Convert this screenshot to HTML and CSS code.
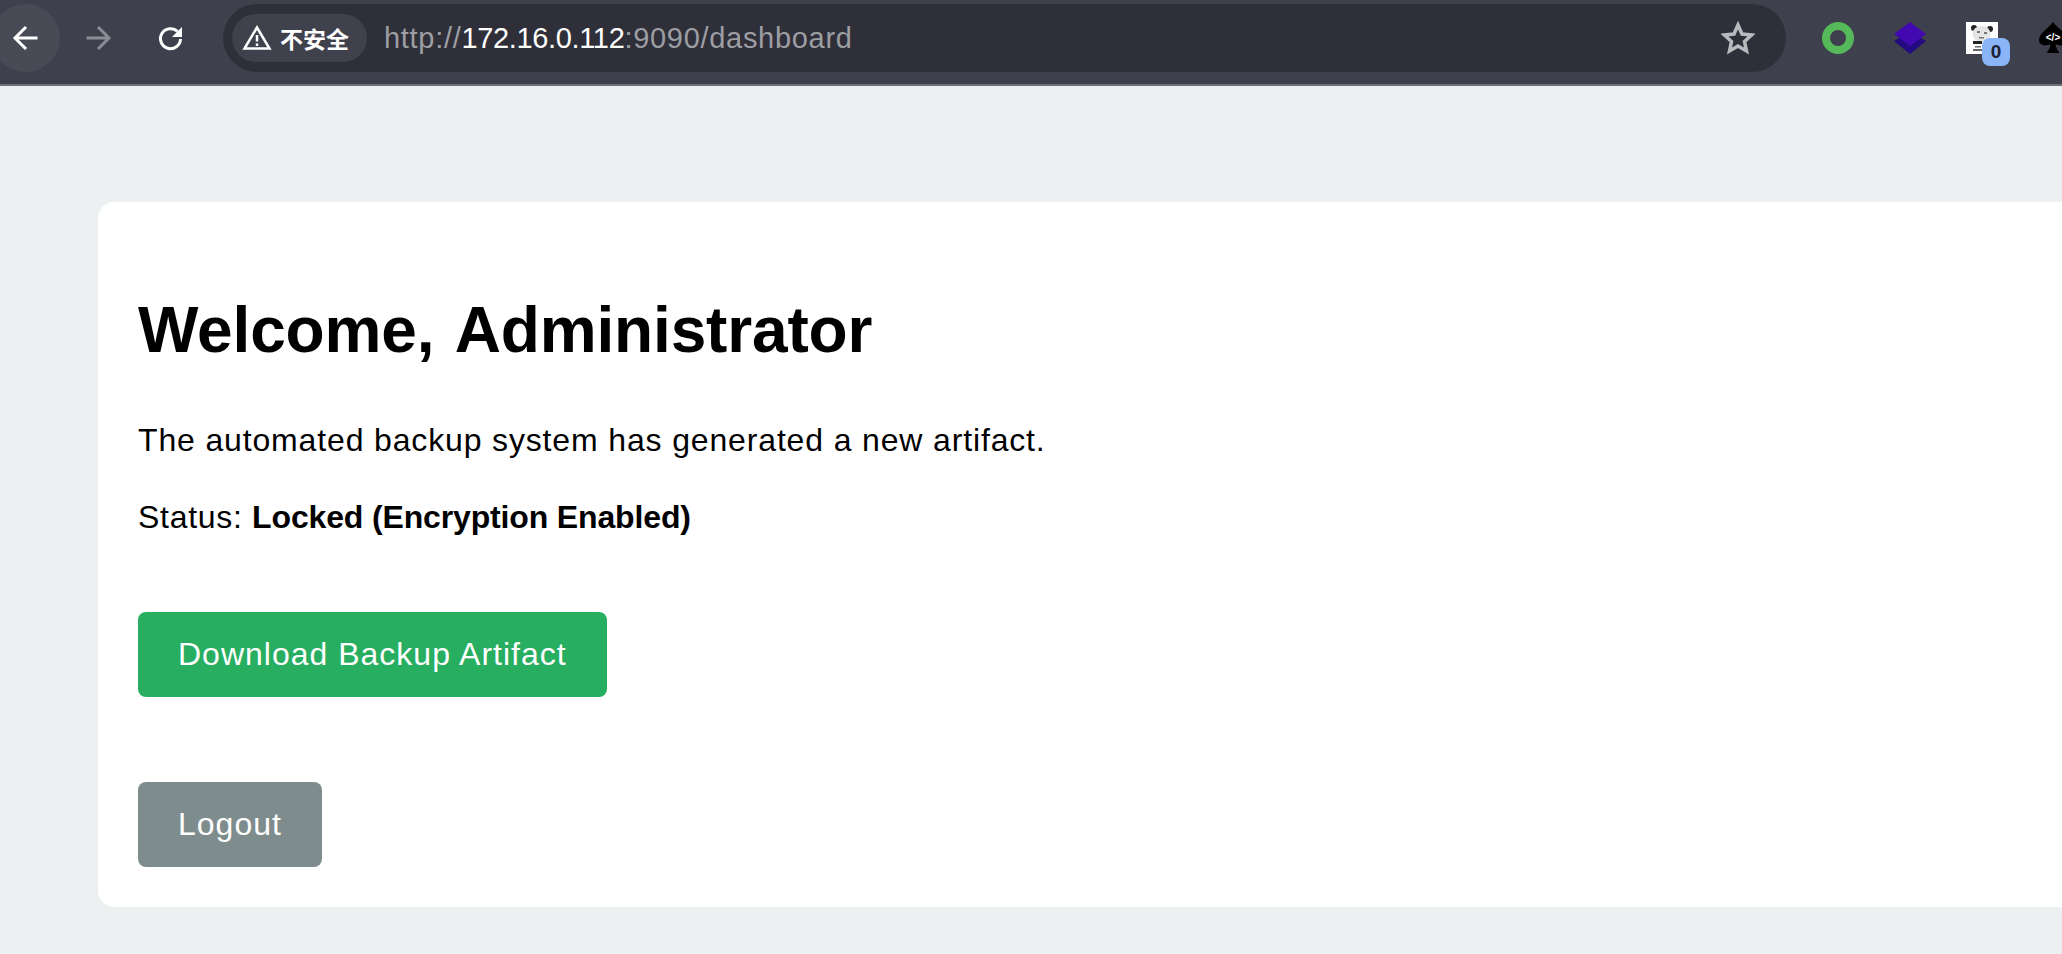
FILE: index.html
```html
<!DOCTYPE html>
<html lang="en">
<head>
  <meta charset="UTF-8"/>
  <title>Dashboard</title>
  <link rel="stylesheet" href="styles.css">
</head>
<body>

  <header class="toolbar">
    <div class="nav-btn nav-back">
      <svg width="30" height="30" viewBox="0 0 30 30"><path d="M26.500 15H4M15 4 4 15l11 11" /></svg>
    </div>
    <div class="nav-btn nav-forward">
      <svg width="30" height="30" viewBox="0 0 30 30"><path d="M3.500 15H26M15 4l11 11-11 11" /></svg>
    </div>
    <div class="nav-btn nav-reload">
      <svg width="30" height="30" viewBox="0 0 30 30"><path d="M22.500 8.500a10 10 0 1 0 3 7.500" /><path class="solid" d="M27 4v10H17z" /></svg>
    </div>

    <div class="omnibox">
      <div class="chip">
        <svg width="30" height="28" viewBox="0 0 30 28"><path d="M15 3.500 2.500 24.500h25zM15 11v6.500M15 19.500v2.500" /></svg>
        <span>不安全</span>
      </div>
      <div class="url">http://<b>172.16.0.112</b>:9090/dashboard</div>
      <svg class="star" width="34" height="34" viewBox="0 0 34 34"><path d="M17 4l4 9 9.500 1-7 6.500 2 9.500-8.500-5-8.500 5 2-9.500-7-6.500 9.500-1z" /></svg>
    </div>

    <div class="extensions">
      <svg width="32" height="32" viewBox="0 0 32 32"><circle cx="16" cy="16" r="12" fill="none" stroke="#55b95a" stroke-width="8"/></svg>
      <svg width="32" height="32" viewBox="0 0 32 32"><path fill="#230a80" d="M16 10l16 9-16 13L0 19z"/><path fill="#4209b0" d="M16 0l16 12-16 12L0 12z"/></svg>
      <div class="ext-panda">
        <svg width="32" height="32" viewBox="0 0 32 32">
          <rect width="32" height="32" fill="#fff"/>
          <ellipse cx="8" cy="6" rx="3" ry="3" fill="#222"/><ellipse cx="24" cy="7" rx="3" ry="3" fill="#222"/>
          <ellipse cx="15.500" cy="12" rx="9" ry="8" fill="#e4e4e4"/>
          <path d="M11 9h3v2h-3zM18 10h3v2h-3zM13 15h5v1.500h-5z" fill="#777"/>
          <path d="M7 19h9v3H7z" fill="#222"/>
          <path d="M9 24h6v1.500H9zM7 27h10v2H7z" fill="#666"/>
        </svg>
        <span class="badge">0</span>
      </div>
      <div class="ext-spade">
        <svg width="32" height="32" viewBox="0 0 32 32"><path fill="#000" d="M16 0C20 6 30 11 30 18c0 5-6 7-11.500 4 .5 3 2 7 4 9H9.500c2-2 3.500-6 4-9C8 25 2 23 2 18 2 11 12 6 16 0z"/></svg>
        <span>&lt;/&gt;</span>
      </div>
    </div>
  </header>

  <main class="page">
    <div class="card">
      <h1>Welcome, Administrator</h1>
      <p>The automated backup system has generated a new artifact.</p>
      <p class="status">Status: <strong>Locked (Encryption Enabled)</strong></p>
      <a class="btn btn-download" href="#">Download Backup Artifact</a>
      <a class="btn btn-logout" href="#">Logout</a>
    </div>
  </main>

</body>
</html>
```

FILE: styles.css
```css
* { box-sizing: border-box; margin: 0; padding: 0; }

html, body {
  height: 100%;
  overflow: hidden;
}

body {
  background: #ecf0f1;
  color: #000;
  font-family: "Liberation Sans", Arial, sans-serif;
}

/* browser chrome */
.toolbar {
  display: flex;
  align-items: center;
  height: 86px;
  padding-bottom: 8px;
  background: #3e404d;
  border-bottom: 2px solid #6d7078;
}

.nav-btn {
  flex: none;
  width: 72px;
  height: 68px;
  display: flex;
  align-items: center;
  justify-content: center;
}

.nav-btn svg path {
  fill: none;
  stroke: #fff;
  stroke-width: 3;
}

.nav-btn svg path.solid {
  fill: #fff;
  stroke: none;
}

.nav-back {
  width: 68px;
  margin-left: -8px;
  margin-right: 2px;
  background: #484a56;
  border-radius: 34px;
}

.nav-forward svg path { stroke: #8b8d96; }

.omnibox {
  flex: none;
  width: 1563px;
  height: 68px;
  margin-left: 17px;
  padding: 0 31px 0 9px;
  display: flex;
  align-items: center;
  background: #2e2f38;
  border-radius: 34px;
}

.chip {
  flex: none;
  width: 135px;
  height: 48px;
  padding-left: 10px;
  display: flex;
  align-items: center;
  gap: 8px;
  color: #fff;
  font: 700 23px "Noto Sans CJK SC", sans-serif;
  background: #3f414d;
  border-radius: 24px;
}

.chip svg path {
  fill: none;
  stroke: #fff;
  stroke-width: 2.500;
}

.url {
  flex: 1;
  margin-left: 17px;
  color: #9d9ea3;
  font-size: 29px;
  letter-spacing: 0.7px;
}

.url b {
  color: #fff;
  font-weight: 400;
  letter-spacing: -0.35px;
}

.star path {
  fill: none;
  stroke: #b9babd;
  stroke-width: 3.500;
}

.extensions {
  flex: none;
  display: flex;
  align-items: center;
  gap: 40px;
  margin-left: 36px;
}

.extensions > * { flex: none; }

.ext-panda, .ext-spade {
  position: relative;
  width: 32px;
  height: 32px;
}

.ext-spade { margin-left: -1px; }

.badge {
  position: absolute;
  left: 16px;
  top: 16px;
  width: 28px;
  height: 28px;
  color: #1c2030;
  font-size: 19px;
  font-weight: 700;
  line-height: 28px;
  text-align: center;
  background: #8ab4f8;
  border-radius: 8px;
}

.ext-spade span {
  position: absolute;
  left: 0;
  right: 0;
  top: 10px;
  color: #fff;
  font-size: 10px;
  font-weight: 700;
  text-align: center;
}

/* page content */
.page {
  padding: 116px 0 0 98px;
}

.card {
  width: 2300px;
  height: 705px;
  padding: 40px;
  background: #fff;
  border-radius: 16px;
}

h1 {
  margin-top: 51px;
  font-size: 64px;
  letter-spacing: -0.15px;
  word-spacing: 5px;
  line-height: 74px;
}

p {
  margin-top: 53px;
  font-size: 32px;
  line-height: 40px;
  letter-spacing: 0.85px;
}

.status { margin-top: 37px; }

.status strong { letter-spacing: -0.15px; }

.status { letter-spacing: 0.7px; }

.btn {
  display: block;
  height: 85px;
  padding: 0 40px;
  width: fit-content;
  color: #fff;
  font-size: 32px;
  letter-spacing: 1px;
  line-height: 85px;
  text-decoration: none;
  border-radius: 8px;
}

.btn-download {
  margin-top: 75px;
  background: #27ae60;
}

.btn-logout {
  margin-top: 85px;
  background: #7f8c8d;
}
```
